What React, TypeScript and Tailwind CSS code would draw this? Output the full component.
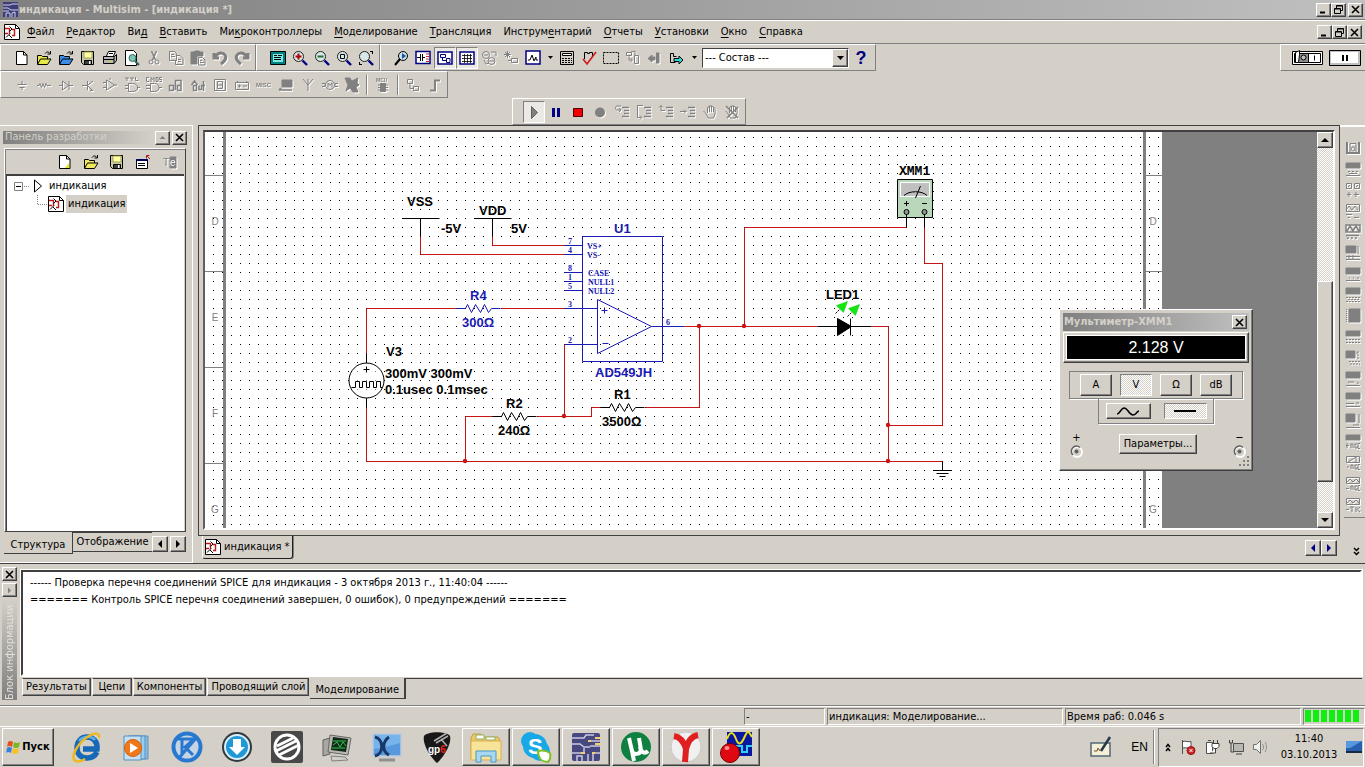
import { useState, type ReactNode } from 'react'

const RAISED =
  'border border-t-white border-l-white border-r-[#404040] border-b-[#404040] bg-[#d4d0c8] shadow-[inset_-1px_-1px_0_#808080]'
const PRESSED =
  'border border-t-[#808080] border-l-[#808080] border-r-white border-b-white bg-[#ebe9e4]'
const BAND =
  'flex items-center border border-t-white border-l-white border-r-[#808080] border-b-[#808080]'
const DISABLED = 'text-[#808080] drop-shadow-[1px_1px_0_#ffffff]'
const CHECKER =
  'bg-[repeating-conic-gradient(#ffffff_0_25%,#d4d0c8_0_50%)] bg-[length:2px_2px]'

function Icon({ children, size = 16 }: { children: ReactNode; size?: number }) {
  return (
    <svg
      width={size}
      height={size}
      viewBox="0 0 16 16"
      fill="none"
      stroke="currentColor"
      aria-hidden="true"
      className="shrink-0"
    >
      {children}
    </svg>
  )
}

function Lens({ children }: { children?: ReactNode }) {
  return (
    <>
      <circle cx="6.5" cy="6.5" r="5" fill="#d8e8e8" stroke="#202020" />
      <path d="M10.5 10.5l4.5 4.5" stroke="#000080" strokeWidth="2.4" />
      {children}
    </>
  )
}

const folder = (fill: string) => (
  <>
    <path d="M1.5 14V5.5h4l1 1h5v2.5" fill={fill} />
    <path d="M1.5 14.5l3-5.5h10.5l-3.5 5.5z" fill={fill} />
    <path d="M9 3.5c1.5-2 3.5-2 5 0M14.5 1v3h-3" />
  </>
)

const listLines = <path d="M8 3.5h7M10 6.5h5M10 9.5h5M8 12.5h7" strokeWidth="1.3" />

const hand = (
  <path d="M3.5 9l3 5h5l1.500-4V4.5M3.5 9l-2-2M5.5 9V3.5M7.5 8V2M9.5 8V2M11.5 8V3M5.5 3.5l2-1.5h2l2 1 1.500 1.5" />
)

const floppy = (
  <>
    <path d="M1.5 1.5h12v13h-10l-2-2z" fill="#c8c8a8" />
    <path d="M4 2h8v6h-8z" fill="#ffffa8" stroke="#a0a050" />
    <path d="M4.5 10.5h7v4h-7z" fill="#404040" />
    <path d="M9 11h1.5v3H9z" fill="#fff" stroke="none" />
  </>
)

const doc = (
  <>
    <path d="M2.5 1.5h7l3.5 3.500v9.500H2.5z" fill="#fff" />
    <path d="M9.5 1.5V5H13" />
  </>
)

const schematicDoc = (
  <>
    <path d="M.5.5h11l4 4v11H.5z" fill="#fff" />
    <path d="M11.5.5v4h4" />
    <path d="M1 4.5h4M1 9.5h3M8 5.5h2.5v6H8M5.5 4v6" stroke="#c01818" strokeWidth="1.4" />
    <path d="M5.5 2.5L8 5 5.5 7.500M6 9.500l-4 4M5 11l3 3" />
  </>
)

const stdIcons: { name: string; off?: boolean; art: ReactNode }[] = [
  { name: 'Создать', art: doc },
  { name: 'Открыть', art: folder('#e8e84a') },
  { name: 'Открыть пример', art: folder('#3b8de8') },
  { name: 'Сохранить', art: floppy },
  {
    name: 'Печать',
    art: (
      <>
        <path d="M4.5 6l2-4.5h7l-2 4.5" fill="#fff" />
        <path d="M1.5 6.5h11l2-2v6l-2.5 3H1.5z" fill="#b8b8b0" />
        <path d="M1 9.5h11M7 3.5h4M12 13.5v-7" />
        <path d="M8 11.5h2" stroke="#d8d820" />
      </>
    ),
  },
  {
    name: 'Просмотр',
    art: (
      <>
        <path d="M1.5.5h8l3 3v12h-11z" fill="#fff" />
        <circle cx="8.5" cy="8" r="3.5" fill="#7ac6b4" stroke="#406860" />
        <path d="M11 11l4 4" stroke="#306058" strokeWidth="2.2" />
      </>
    ),
  },
  {
    name: 'Вырезать',
    off: true,
    art: (
      <>
        <path d="M5.5 1l4 9M10.5 1l-4 9" strokeWidth="1.5" />
        <circle cx="5" cy="12" r="2" />
        <circle cx="11" cy="12" r="2" />
      </>
    ),
  },
  {
    name: 'Копировать',
    off: true,
    art: <path d="M1.5 1.5h5l2 2v7h-7zM3 4.5h3M3 6.5h4M8 5.5h4l3 3v6H7.5v-4M10 9.5h3M10 11.5h3" />,
  },
  {
    name: 'Вставить',
    off: true,
    art: (
      <>
        <path d="M1 2h3l1-1h4l1 1h3v4H7v8H1z" fill="currentColor" />
        <path d="M8.5 7.5h4L15 10v5H8.500zM10 10.5h2M10 12.5h4" />
      </>
    ),
  },
  { name: 'Отменить', off: true, art: <path d="M2 3v5h5M3 7c3-5 8-5 10-2s0 6-4 9" strokeWidth="3" /> },
  { name: 'Вернуть', off: true, art: <path d="M14 3v5H9M13 7C10 2 5 2 3 5s0 6 4 9" strokeWidth="3" /> },
]

const viewIcons: { name: string; art: ReactNode }[] = [
  {
    name: 'Полный экран',
    art: (
      <>
        <path d="M.5 1.5h15v13H.5z" fill="#008080" />
        <path d="M3 4h10v8H3z" fill="#80e8e0" stroke="none" />
        <path d="M4 5.5h3M8 5.5h4M4 7.5h7M4 9.5h7" />
      </>
    ),
  },
  { name: 'Увеличить', art: <Lens><path d="M3.5 6.5h6M6.5 3.5v6" stroke="#b00000" strokeWidth="2" /></Lens> },
  { name: 'Уменьшить', art: <Lens><path d="M3.5 6.5h6" stroke="#207030" strokeWidth="2" /></Lens> },
  { name: 'Масштаб области', art: <Lens><path d="M4.5 4.5h4v4h-4z" /></Lens> },
  { name: 'Масштаб листа', art: <Lens><path d="M12 1.5h3M14.5 1v3M1.5 12v3M1 14.5h3" /></Lens> },
]

const toolIcons: { name: string; off?: boolean; on?: boolean; art: ReactNode }[] = [
  {
    name: 'Поиск',
    art: (
      <>
        <circle cx="10" cy="6" r="4.5" fill="#c8e0e8" />
        <path d="M9 3l4 3-4 3z" fill="#2050a0" stroke="none" />
        <path d="M7 9l-5 6" strokeWidth="2" />
      </>
    ),
  },
  {
    name: 'Соединитель',
    art: (
      <>
        <path d="M1 1.5h14v12H1z" fill="#fff" stroke="#000080" strokeWidth="1.5" />
        <path d="M2 7.5h3M5.5 4v7M7.5 4v7M8 7.5h2" />
        <path d="M11 4h3M11 6.5h3M11 9h3M11 11.5h3" stroke="#d02020" />
      </>
    ),
  },
  {
    name: 'Панель разработки',
    on: true,
    art: (
      <>
        <path d="M1 2h14v12H1z" fill="#fff" stroke="#000080" strokeWidth="1.5" />
        <path d="M3.5 4.5h5v3h-5zM5.5 8v2.500h4M9.5 8.500h3.500v4H9.500z" stroke="#000080" />
      </>
    ),
  },
  {
    name: 'Таблица',
    on: true,
    art: (
      <>
        <path d="M1 2h14v12H1z" fill="#fff" stroke="#000080" strokeWidth="1.5" />
        <path d="M3 5.5h10M3 8.5h10M3 11.500h10M5.5 4v9M8.5 4v9M11.500 4v9" strokeWidth=".8" />
      </>
    ),
  },
  {
    name: 'База данных',
    off: true,
    art: (
      <>
        <circle cx="5" cy="5" r="3.500" />
        <circle cx="10.500" cy="11" r="3.500" />
        <path d="M3 5h4M8 11h5M10 2h5v4M3 10l2 4 3-1" />
      </>
    ),
  },
  { name: 'Создать компонент', off: true, art: <path d="M4.5 1v7M1 4.5h7M2 2l5 5M7 2L2 7M5 10.5h3M8.5 8.5h6v4h-6z" /> },
  {
    name: 'Плоттер',
    art: (
      <>
        <path d="M1 1h14v13H1z" fill="#fff" stroke="#000080" strokeWidth="1.5" />
        <path d="M3 10h2l2-5 2 6 2-4v3h2" />
      </>
    ),
  },
]

const moreIcons: { name: string; off?: boolean; art: ReactNode }[] = [
  {
    name: 'Постпроцессор',
    art: (
      <>
        <path d="M1.5 1.5h13v13h-13z" />
        <path d="M3.5 3.5h9v2h-9z" fill="#fff" />
        <path d="M3 8.5h10M3 10.5h10M3 12.5h10" strokeDasharray="2 1" />
      </>
    ),
  },
  {
    name: 'Проверка цепи',
    art: (
      <>
        <path d="M3.5 9V2.500h3v1h2v-1h3v4" />
        <path d="M2 9l4 5 9-12" stroke="#d01818" strokeWidth="1.6" />
      </>
    ),
  },
  { name: 'Область', art: <path d="M.5 2.5h15v11H.5z" strokeDasharray="2 1" /> },
  { name: 'Иерархия', off: true, art: <path d="M1.5 2.5h5v3h-5zM9.5 5.5h4v8h-4zM4 6v4h3M5.5 8l2 2-2 2M6 2l4-1v4" /> },
  { name: 'Обратная аннотация', off: true, art: <path d="M1 8.5L5 5v2h3v3H5v2zM9 3h3v10H9" fill="currentColor" /> },
  {
    name: 'Прямая аннотация',
    art: (
      <>
        <path d="M1.5 12.5v-9h3v3h3M1.500 12.500h5" />
        <path d="M5 8.500h5V6l4 4-4 4v-2.500H5z" fill="#30d8d0" />
      </>
    ),
  },
]

const partIcons: { name: string; art: ReactNode }[] = [
  { name: 'Источники', art: <path d="M8 4v3M3.5 7.500h9M5.500 10.500h5M8 11v2" /> },
  { name: 'Пассивные', art: <path d="M1 8.5h2l1-2 1.500 4 1.500-4 1.500 4 1.500-4 1 2h4" /> },
  { name: 'Диоды', art: <path d="M1 8.5h3M4.5 4v9l6-4.500zM11 4v9M11 8.5h4" /> },
  { name: 'Транзисторы', art: <path d="M2 8.5h5M7.5 4v9M8 8l5-4M8 9l5 5M13 13.5h-3" /> },
  { name: 'Аналоговые', art: <path d="M4.5 3v10l8-5zM1 5.5h3M1 10.5h3M12 8h3M8 3V1" /> },
  { name: 'ТТЛ', art: <path d="M4.5 6.5h4c7 0 7 8 0 8h-4zM1 8.5h3M1 11.5h3M13 10.5h3M1 1h4M3 1v3M6 1h4M8 1v3M11.5 0v3.500h3" /> },
  { name: 'КМОП', art: <path d="M4.5 6.5h4c6 0 6 8 0 8h-4zM0 8.5h4M0 11.5h4M13 10.5h3M3 .5H.5v4H3M5 5V.5L6.5 2.5 8 .5V5M10 4.5v-4h2v4zM16 .5h-2.500v2H16v2h-2.500" /> },
  { name: 'Цифровые', art: <path d="M1.5 8.5h4v5h-4zM7.5 3v10M7 3.5h6v9M9.5 8.5H13v5H9.500z" strokeWidth="1.5" /> },
  { name: 'Смешанные', art: <path d="M1.5 8l3-4 3 4M3.500 8.500h3v5h-3zM9 8.5v4h2.500v-4M13.500 4v10M11 8.5h4" strokeWidth="1.5" /> },
  { name: 'Индикаторы', art: <path d="M2.5 2.5h11v11h-11zM5.5 4.5h5v7h-5zM5.5 8h5" /> },
  { name: 'Силовые', art: <path d="M1.5 5.5h13v7h-13zM3.5 4v1M12.5 4v1M4 9h3M9 9h4M5.5 7.5v3" /> },
  {
    name: 'Прочие',
    art: (
      <text x="0" y="10" fontSize="6" fill="currentColor" stroke="none" fontWeight="bold" fontFamily="Liberation Sans, sans-serif">
        MISC
      </text>
    ),
  },
  {
    name: 'Периферия',
    art: (
      <>
        <path d="M4 3h10v7H4z" fill="currentColor" />
        <path d="M1 13h13M1 13l2-2" strokeWidth="1.5" />
      </>
    ),
  },
  { name: 'ВЧ', art: <path d="M3 2l5 6 5-6M8 2v12" /> },
  {
    name: 'Электромеханика',
    art: (
      <>
        <circle cx="8" cy="8" r="4.5" />
        <path d="M0 6.500h3v3H0M16 6.500h-3v3h3M6 10.5V6l2 2.500L10 6v4.5" />
      </>
    ),
  },
  { name: 'NI', art: <path d="M1 1h5l2 3 6-3-1 5 2 2-3 2 2 5H9l-3-4-4 3 2-6z" fill="currentColor" /> },
]

const simIcons: { name: string; off?: boolean; on?: boolean; art: ReactNode }[] = [
  { name: 'Пуск', on: true, art: <path d="M5.5 2.5l6 6-6 6z" fill="#808080" stroke="#606060" /> },
  { name: 'Пауза', art: <path d="M4 4h3v9H4zM9 4h3v9H9z" fill="#000080" stroke="none" /> },
  { name: 'Стоп', art: <path d="M3.5 4.5h9v8h-9z" fill="#f00000" stroke="#500000" /> },
  { name: 'Запись', off: true, art: <circle cx="8" cy="8.5" r="5" fill="currentColor" stroke="none" /> },
  { name: 'Шаг с заходом', off: true, art: <>{listLines}<path d="M7 2H3C1 2 1 6 3 6h3M5 4l2 2-2 2" /></> },
  { name: 'Шаг с обходом', off: true, art: <>{listLines}<path d="M7 1.5H1.5v12H5M4 11.5l2 2-2 2" /></> },
  { name: 'Шаг с выходом', off: true, art: <>{listLines}<path d="M3 1.5v5h4M1 3.5l2-2 2 2" /></> },
  { name: 'До курсора', off: true, art: <>{listLines}<path d="M0 7.5h6M4 5.5l2 2-2 2" /></> },
  { name: 'Точка останова', off: true, art: hand },
  { name: 'Удалить точки', off: true, art: <>{hand}<path d="M2 2l12 12M3 14L14 3" strokeWidth="1.5" /></> },
]

const menu = [
  ['', 'Ф', 'айл'],
  ['', 'Р', 'едактор'],
  ['Ви', 'д', ''],
  ['', 'В', 'ставить'],
  ['Ми', 'к', 'роконтроллеры'],
  ['', 'М', 'оделирование'],
  ['', 'Т', 'рансляция'],
  ['Инструм', 'е', 'нтарий'],
  ['', 'О', 'тчеты'],
  ['', 'У', 'становки'],
  ['', 'О', 'кно'],
  ['', 'С', 'правка'],
]

function ToolButton({ name, off, on, children }: { name: string; off?: boolean; on?: boolean; children: ReactNode }) {
  return (
    <button
      type="button"
      aria-label={name}
      className={`flex h-[22px] w-[22px] shrink-0 items-center justify-center ${on ? PRESSED : ''}`}
    >
      <span className={off ? DISABLED : 'text-black'}>
        <Icon>{children}</Icon>
      </span>
    </button>
  )
}

function DropArrow() {
  return (
    <button type="button" aria-label="Список" className="flex w-3 shrink-0 justify-center">
      <svg width="5" height="3" aria-hidden="true"><path d="M0 0h5L2.5 3z" /></svg>
    </button>
  )
}

function CaptionButton({ name, art }: { name: string; art: 'min' | 'restore' | 'close' | 'up' | 'right' }) {
  return (
    <button
      type="button"
      aria-label={name}
      className={`flex h-[14px] w-[15px] shrink-0 items-center justify-center ${RAISED}`}
    >
      <svg width="9" height="9" viewBox="0 0 9 9" fill="none" stroke="#000" aria-hidden="true">
        {art === 'min' && <path d="M1 7.500h5" strokeWidth="2" />}
        {art === 'restore' && <path d="M2.5 3V.5h6v5h-2M2.5 1h6M.5 3.5h6v5h-6zM.5 4h6" />}
        {art === 'close' && <path d="M1 1l7 7M8 1L1 8" strokeWidth="1.6" />}
        {art === 'up' && <path d="M1.5 6h6l-3-3z" fill="#808080" stroke="none" />}
        {art === 'right' && <path d="M3 1.5v6l3-3z" fill="#808080" stroke="none" />}
      </svg>
    </button>
  )
}

function ArrowButton({ dir, color = '#000' }: { dir: 'left' | 'right' | 'up' | 'down'; color?: string }) {
  const paths = { left: 'M6 0v8L2 4z', right: 'M2 0v8l4-4z', up: 'M0 6h8L4 2z', down: 'M0 2h8L4 6z' }
  return (
    <button type="button" aria-label={dir} className={`flex h-4 w-4 shrink-0 items-center justify-center ${RAISED}`}>
      <svg width="8" height="8" aria-hidden="true"><path d={paths[dir]} fill={color} /></svg>
    </button>
  )
}

function TitleBar() {
  return (
    <header className="flex h-5 shrink-0 items-center border-b border-[#808080] bg-linear-to-r from-[#808080] to-[#c0c0c0] pr-[2px] pl-[3px]">
      <svg width="15" height="15" viewBox="0 0 15 15" aria-hidden="true">
        <path d="M0 0h15v15H0z" fill="#3c3c78" />
        <path d="M0 3h7l2-1h6M0 6h5l3 2h7M0 9h6M3 15v-4h4v4M9 15v-4l3-1v5" fill="none" stroke="#d0d0e8" />
      </svg>
      <h1 className="ml-[1px] flex-1 font-bold text-[#d4d0c8]">индикация - Multisim - [индикация *]</h1>
      <CaptionButton name="Свернуть" art="min" />
      <CaptionButton name="Восстановить" art="restore" />
      <div className="w-[2px]" />
      <CaptionButton name="Закрыть" art="close" />
    </header>
  )
}

function MenuBar() {
  return (
    <nav className="flex h-6 shrink-0 items-center border-t border-b border-t-white border-b-[#808080] pr-[3px] pl-1">
      <Icon>{schematicDoc}</Icon>
      <div className="flex flex-1 pl-[1px]">
        {menu.map(([before, key, after]) => (
          <button key={before + key + after} type="button" className="px-[6px]">
            {before}
            <u className="underline-offset-2">{key}</u>
            {after}
          </button>
        ))}
      </div>
      <CaptionButton name="Свернуть документ" art="min" />
      <CaptionButton name="Восстановить документ" art="restore" />
      <CaptionButton name="Закрыть документ" art="close" />
    </nav>
  )
}

function Toolbars() {
  return (
    <div className="shrink-0">
      <div className="flex h-[27px]">
        <div className={`${BAND} w-64 pl-[10px]`}>
          {stdIcons.map((i) => <ToolButton key={i.name} name={i.name} off={i.off}>{i.art}</ToolButton>)}
        </div>
        <div className={`${BAND} w-[124px] pl-[10px]`}>
          {viewIcons.map((i) => <ToolButton key={i.name} name={i.name}>{i.art}</ToolButton>)}
        </div>
        <div className={`${BAND} w-[496px] pl-[9px]`}>
          {toolIcons.map((i) => <ToolButton key={i.name} name={i.name} off={i.off} on={i.on}>{i.art}</ToolButton>)}
          <DropArrow />
          {moreIcons.map((i) => <ToolButton key={i.name} name={i.name} off={i.off}>{i.art}</ToolButton>)}
          <DropArrow />
          <div className="relative ml-[2px] flex h-5 w-[147px] border border-t-[#404040] border-r-white border-b-white border-l-[#404040] bg-white">
            <select aria-label="Состав" className="w-full appearance-none pl-[2px] outline-none">
              <option>--- Состав ---</option>
            </select>
            <span className={`pointer-events-none absolute inset-y-0 right-0 flex w-4 items-center justify-center ${RAISED}`}>
              <svg width="7" height="4" aria-hidden="true"><path d="M0 0h7L3.5 4z" /></svg>
            </span>
          </div>
          <button type="button" aria-label="Справка по программе" className="w-6 font-['Liberation_Sans',sans-serif] text-[18px] leading-5 font-bold text-[#000080]">
            ?
          </button>
        </div>
        <div className="flex-1" />
        <div className={`${BAND} w-[85px] justify-end gap-[6px] border-r-0 pr-[4px]`}>
          <button type="button" aria-label="Выключатель" className="h-4 w-[31px]">
            <svg width="31" height="16" viewBox="0 0 31 16" fill="none" stroke="#000" aria-hidden="true">
              <path d="M.5 1.5h30v13H.5z" fill="#fff" />
              <path d="M2.5 3.5h26v9h-26z" fill="#fff" />
              <path d="M3 4h13v8H3z" fill="#909090" stroke="none" />
              <path d="M16.5 3.500v9" />
              <path d="M3.5 12.500V2.500l4-2v4l-1 8z" fill="#fff" />
              <circle cx="11.5" cy="7.5" r="2.5" fill="#c0c0c0" />
              <path d="M22.5 5.5v5" />
            </svg>
          </button>
          <button type="button" aria-label="Пауза моделирования" className="h-4 w-[32px]">
            <svg width="32" height="16" viewBox="0 0 32 16" aria-hidden="true">
              <path d="M.5.5h31v15H.5z" fill="#c0c0c0" stroke="#000" />
              <path d="M2 2h27v11H2z" fill="#fff" />
              <path d="M13 5h2v6h-2zM17 5h2v6h-2z" />
            </svg>
          </button>
        </div>
      </div>
      <div className="flex h-[27px]">
        <div className={`${BAND} w-[448px] pl-[10px]`}>
          {partIcons.map((i) => <ToolButton key={i.name} name={i.name} off>{i.art}</ToolButton>)}
          <span className="ml-[3px] h-5 w-[2px] border-r border-l border-r-white border-l-[#808080]" />
          <span className="w-[4px]" />
          <ToolButton name="Микроконтроллер" off>
            <text x="1" y="5" fontSize="5" fill="currentColor" stroke="none" fontWeight="bold" fontFamily="Liberation Sans, sans-serif">MCU</text>
            <path d="M5.5 6.5h5v8h-5zM3 8h10M3 10.5h10M3 13h10" fill="currentColor" />
          </ToolButton>
          <span className="ml-[3px] h-5 w-[2px] border-r border-l border-r-white border-l-[#808080]" />
          <span className="w-[3px]" />
          <ToolButton name="Иерархический блок" off>
            <path d="M2.5 2.5h5v4h-5zM5 7v4.5h3M8.5 9.5h5v4h-5z" />
          </ToolButton>
          <ToolButton name="Шина" off>
            <path d="M3 13.5h5v-10h5" strokeWidth="2" />
          </ToolButton>
        </div>
      </div>
      <div className="flex h-[27px] pl-[512px]">
        <div className={`${BAND} w-[234px] pl-[10px]`}>
          {simIcons.map((i) => <ToolButton key={i.name} name={i.name} off={i.off} on={i.on}>{i.art}</ToolButton>)}
        </div>
      </div>
    </div>
  )
}

function DesignPanel() {
  return (
    <aside className="flex w-[193px] shrink-0 flex-col border-t border-r border-b border-white pt-1 pb-[3px]">
      <div className="ml-[3px] flex h-[15px] items-center gap-[2px] pr-[5px]">
        <h2 className="h-[13px] flex-1 bg-linear-to-r from-[#808080] to-[#d4d0c8] pl-[2px] leading-[12px] text-[#d4d0c8]">
          Панель разработки
        </h2>
        <CaptionButton name="Свернуть панель" art="up" />
        <CaptionButton name="Закрыть панель" art="close" />
      </div>
      <div className="mt-[3px] mr-[6px] ml-1 flex min-h-0 flex-1 flex-col border border-t-white border-l-white border-r-[#404040] border-b-[#404040] shadow-[inset_1px_1px_0_#808080]">
        <div className="flex h-[25px] shrink-0 items-center justify-end gap-1 pr-[5px]">
          <ToolButton name="Новый проект">
            {doc}
            <path d="M12 9v5H8z" fill="#e8e820" stroke="none" />
          </ToolButton>
          <ToolButton name="Открыть проект">{folder('#f0e860')}</ToolButton>
          <ToolButton name="Сохранить проект">{floppy}</ToolButton>
          <ToolButton name="Закрыть проект">
            <path d="M1.5 5.5h11v9h-11z" fill="#fff" />
            <path d="M1.5 6h11" stroke="#000060" strokeWidth="2" />
            <path d="M3 9.5h7M3 11.5h7" />
            <path d="M15 5l-3-3M11.5 4.5v-3h3" stroke="#a02020" />
          </ToolButton>
          <ToolButton name="Переименовать" off>
            <path d="M9 3h6v11H9z" fill="currentColor" />
            <text x="2" y="12" fontSize="10" fill="currentColor" stroke="none" fontFamily="Liberation Sans, sans-serif">T</text>
            <text x="9" y="12" fontSize="10" fill="#fff" stroke="none" fontFamily="Liberation Sans, sans-serif">e</text>
          </ToolButton>
        </div>
        <ul className="mx-[1px] min-h-0 flex-1 border-t-2 border-l border-[#404040] bg-white pt-[1px] pl-[7px]">
          <li className="flex h-[18px] items-center">
            <svg width="16" height="18" aria-hidden="true" fill="none" stroke="#808080">
              <path d="M.5 5.5h8v8h-8z" />
              <path d="M2 9.5h5" stroke="#000" />
              <path d="M10 9.5h6" strokeDasharray="1 1" />
            </svg>
            <svg width="10" height="14" className="ml-1" aria-hidden="true">
              <path d="M.5 1v12l7-6z" fill="#fff" stroke="#000" />
            </svg>
            <span className="ml-[5px]">индикация</span>
          </li>
          <li className="flex h-[18px] items-center">
            <svg width="11" height="18" className="ml-[23px]" aria-hidden="true">
              <path d="M.5 0v9.5H11" fill="none" stroke="#808080" strokeDasharray="1 1" />
            </svg>
            <Icon>{schematicDoc}</Icon>
            <span className="ml-[2px] bg-[#d4d0c8] px-[2px] leading-[18px]">индикация</span>
          </li>
        </ul>
      </div>
      <div role="tablist" className="mr-[6px] ml-1 flex h-[27px] items-start">
        <button type="button" role="tab" aria-selected="true" className="h-[22px] w-[69px] border-r border-b border-[#404040] pt-[4px]">
          Структура
        </button>
        <button type="button" role="tab" aria-selected="false" className="h-[20px] flex-1 border border-t-[#404040] border-r-0 border-b-[#404040] border-l-0">
          Отображение
        </button>
        <div className="flex gap-[2px] pt-1">
          <ArrowButton dir="left" />
          <ArrowButton dir="right" />
        </div>
      </div>
    </aside>
  )
}

const zigzag = 'h9l2-4 4 8 4-8 5 8 4-8 4 8 3-4h9'
const BLUE = '#1a1ab4'
const RED = '#c81414'

const labels: { x: number; y: number; text: string; blue?: boolean }[] = [
  { x: 407, y: 206, text: 'VSS' },
  { x: 479, y: 215, text: 'VDD' },
  { x: 441, y: 233, text: '-5V' },
  { x: 511, y: 233, text: '5V' },
  { x: 614, y: 233, text: 'U1', blue: true },
  { x: 470, y: 300, text: 'R4', blue: true },
  { x: 462, y: 327, text: '300Ω', blue: true },
  { x: 595, y: 377, text: 'AD549JH', blue: true },
  { x: 386, y: 356, text: 'V3' },
  { x: 385, y: 378, text: '300mV 300mV' },
  { x: 385, y: 394, text: '0.1usec 0.1msec' },
  { x: 506, y: 408, text: 'R2' },
  { x: 498, y: 435, text: '240Ω' },
  { x: 614, y: 399, text: 'R1' },
  { x: 602, y: 426, text: '3500Ω' },
  { x: 826, y: 299, text: 'LED1' },
]

const pins = [
  { x: 587, y: 249, text: 'VS+' },
  { x: 587, y: 258, text: 'VS-' },
  { x: 588, y: 276, text: 'CASE' },
  { x: 588, y: 285, text: 'NULL1' },
  { x: 588, y: 294, text: 'NULL2' },
  { x: 568, y: 244, text: '7' },
  { x: 568, y: 253, text: '4' },
  { x: 568, y: 271, text: '8' },
  { x: 568, y: 280, text: '1' },
  { x: 568, y: 289, text: '5' },
  { x: 568, y: 307, text: '3' },
  { x: 568, y: 343, text: '2' },
  { x: 666, y: 325, text: '6' },
]

const zones = [
  { x: 215, y: 225, text: 'D' },
  { x: 215, y: 321, text: 'E' },
  { x: 215, y: 417, text: 'F' },
  { x: 215, y: 513, text: 'G' },
  { x: 1153, y: 225, text: 'D' },
  { x: 1153, y: 513, text: 'G' },
]

const ticks = [175, 271, 367, 463]
const nodes = [[699, 326], [744, 326], [564, 416], [465, 461], [888, 425], [888, 461]]

function Schematic() {
  return (
    <svg width="957" height="600" viewBox="205 132 957 600" className="shrink-0" role="img" aria-label="Схема">
      <defs>
        <pattern id="grid" x="213" y="137" width="9" height="9" patternUnits="userSpaceOnUse">
          <rect width="1" height="1" fill="#000" />
        </pattern>
      </defs>
      <rect x="205" y="132" width="957" height="600" fill="#fff" />
      <rect x="205" y="132" width="957" height="600" fill="url(#grid)" />
      <path d="M223 132h3v600h-3zM1143 132h3v600h-3z" fill="#808080" />
      <g fill="#808080" fontSize="10" fontFamily="Liberation Sans, sans-serif" textAnchor="middle">
        {ticks.map((y) => <path key={y} d={`M205 ${y}h18v1h-18zM1146 ${y}h16v1h-16z`} />)}
        {zones.map((z) => <text key={z.text + z.x} x={z.x} y={z.y}>{z.text}</text>)}
      </g>
      <g transform="translate(.5 .5)" fill="none" stroke={RED}>
        <path d="M420 236v18h144M492 236v9h72M366 353v-45h90M501 308h63M564 344v72M537 416h54v-9h9M645 407h54v-81M684 326h133M871 326h17v135M744 326v-99h162M924 227v36h18v162h-54M366 407v54h576M465 461v-45h27" />
      </g>
      <g transform="translate(.5 .5)" fill="none" stroke="#000">
        <path d="M402 218h37M420 218v18M474 218h37M492 218v18M366 353v10M366 398v9" />
        <circle cx="366" cy="380" r="17.5" fill="#fff" fillOpacity=".5" />
        <path d="M363 369h6M366 366v6M351 387h4v-6h4v6h3v-6h4v6h3v-6h4v6h3v-6h4v6h2" />
        <path d={`M492 416${zigzag}`} />
        <path d={`M600 407${zigzag}`} />
        <path d="M817 326h54M850 318v17M942 461v9M933 470h18M936 473h12M939 476h6" />
        <path d="M837 318v17l14-9z" fill="#000" />
        <path d="M835 313l5-5M847 316l5-5" strokeDasharray="2 1" />
        <path d="M836 305l11-4-4 11zM848 308l11-4-4 11z" fill="#10e810" stroke="#10c810" strokeWidth=".5" />
      </g>
      <g transform="translate(.5 .5)" fill="none" stroke={BLUE}>
        <path d="M582 236h80v125h-80z" />
        <path d="M564 245h18M564 254h18M564 272h18M564 281h18M564 290h18M564 308h33M564 344h33M651 326h33M597 299v54l54-27zM601 310h6M604 307v6M602 343h6" />
        <path d={`M456 308${zigzag}`} />
      </g>
      <g fill={RED}>
        {nodes.map(([x, y]) => <circle key={`${x}-${y}`} cx={x} cy={y} r="2.2" />)}
      </g>
      <g stroke="#000">
        <path d="M897.5 179.5h35v38h-35z" fill="#b9d8bb" />
        <path d="M900.5 182.500h29v14h-29z" fill="#c0c0c0" stroke="#fff" />
        <path d="M904 195.5c5-5 18-5 23 0M915.500 198l5-12M904 203.5h5M906.5 201v5M922 203.5h5M906.5 213v14M924.5 213v14" fill="none" />
        <circle cx="906.5" cy="212" r="2.5" fill="#909890" />
        <circle cx="924.5" cy="212" r="2.5" fill="#909890" />
      </g>
      <g fontFamily="Liberation Sans, sans-serif" fontWeight="bold" fontSize="13">
        {labels.map((l) => (
          <text key={l.text + l.x} x={l.x} y={l.y} fill={l.blue ? BLUE : '#000'}>{l.text}</text>
        ))}
      </g>
      <g fontFamily="Liberation Serif, serif" fontWeight="bold" fontSize="8" fill={BLUE}>
        {pins.map((p) => <text key={p.text} x={p.x} y={p.y}>{p.text}</text>)}
      </g>
      <text x="899" y="175" fontFamily="Liberation Mono, monospace" fontWeight="bold" fontSize="13">XMM1</text>
    </svg>
  )
}

function Terminal() {
  return (
    <svg width="13" height="13" viewBox="0 0 13 13" fill="none" aria-hidden="true">
      <circle cx="7" cy="7" r="5" stroke="#fff" strokeWidth="2" />
      <path d="M3 10A5 5 0 0 1 10 2.5" stroke="#606060" strokeWidth="1.5" />
      <circle cx="6.5" cy="6.5" r="2" fill="#606060" />
    </svg>
  )
}

function Multimeter() {
  const [mode, setMode] = useState('V')
  return (
    <section className={`absolute top-[183px] right-[86px] h-[162px] w-[194px] p-[3px] ${RAISED}`}>
      <div className="flex h-[18px] items-center justify-between bg-linear-to-r from-[#808080] to-[#c0c0c0] pr-[2px] pl-[1px]">
        <h2 className="font-bold text-[#d4d0c8]">Мультиметр-XMM1</h2>
        <CaptionButton name="Закрыть мультиметр" art="close" />
      </div>
      <div className={`mt-[1px] h-[31px] p-[2px] ${RAISED}`}>
        <output className="block h-[25px] border border-white bg-black text-center font-['Liberation_Sans',sans-serif] text-[16px] leading-[23px] text-white">
          2.128 V
        </output>
      </div>
      <div className="mx-[6px] mt-[8px] flex h-7 items-center justify-center gap-2 border border-[#808080] shadow-[1px_1px_0_#fff]">
        {['A', 'V', 'Ω', 'dB'].map((m) => (
          <button
            key={m}
            type="button"
            onClick={() => setMode(m)}
            className={`h-[22px] w-8 ${mode === m ? `${PRESSED} ${CHECKER}` : RAISED}`}
          >
            {m}
          </button>
        ))}
      </div>
      <div className="mx-auto flex h-[25px] w-[116px] items-center justify-around border border-t-0 border-[#808080] shadow-[1px_1px_0_#fff]">
        <button type="button" aria-label="Переменный ток" className={`flex h-4 w-[45px] items-center justify-center ${RAISED}`}>
          <svg width="22" height="9" fill="none" stroke="#000" strokeWidth="1.5" aria-hidden="true">
            <path d="M0 7c3 0 4-6 7-6 4 0 5 7 9 7 3 0 3-3 6-4" />
          </svg>
        </button>
        <button type="button" aria-label="Постоянный ток" className={`flex h-4 w-[43px] items-center justify-center ${PRESSED} ${CHECKER}`}>
          <span className="h-[2px] w-[22px] bg-black" />
        </button>
      </div>
      <div className="flex items-start justify-between pt-[10px] pr-[3px] pl-[7px]">
        <div className="flex flex-col items-center gap-[3px] leading-[8px]">
          <span>+</span>
          <Terminal />
        </div>
        <button type="button" className={`h-5 w-[78px] ${RAISED}`}>Параметры...</button>
        <div className="flex flex-col items-center gap-[3px] leading-[8px]">
          <span>−</span>
          <Terminal />
        </div>
      </div>
      <svg width="12" height="12" className="absolute right-[2px] bottom-[2px]" aria-hidden="true">
        <path d="M9 0h2v2H9zM5 4h2v2H5zM9 4h2v2H9zM1 8h2v2H1zM5 8h2v2H5zM9 8h2v2H9z" fill="#808080" />
      </svg>
    </section>
  )
}

function Workspace() {
  return (
    <main className="ml-[5px] flex min-w-0 flex-1 flex-col">
      <div className="relative flex min-h-0 flex-1 border border-[#404040] p-1 pb-[5px]">
        <div className="flex min-w-0 flex-1 border-2 border-t-[#404040] border-r-white border-b-white border-l-[#606060]">
          <div className="flex min-w-0 flex-1 overflow-hidden bg-[#808080]">
            <Schematic />
          </div>
          <div className={`flex w-4 shrink-0 flex-col ${CHECKER}`}>
            <ArrowButton dir="up" />
            <div className="min-h-0 flex-[134]" />
            <div className={`min-h-0 flex-[201] ${RAISED}`} />
            <div className="min-h-0 flex-[30]" />
            <ArrowButton dir="down" />
          </div>
        </div>
        <Multimeter />
      </div>
      <div className="flex h-[27px] shrink-0 items-start justify-between pr-[3px] pl-1">
        <button type="button" className="flex h-[23px] items-center gap-[2px] rounded-b-[3px] border border-t-0 border-l-white border-r-[#202020] border-b-[#202020] px-[2px] shadow-[1px_0_0_#808080]">
          <Icon>{schematicDoc}</Icon>
          <span className="px-px">индикация *</span>
        </button>
        <div className="flex pt-1">
          <ArrowButton dir="left" color="#000080" />
          <ArrowButton dir="right" color="#000080" />
        </div>
      </div>
    </main>
  )
}

const instruments: { name: string; art: ReactNode }[] = [
  { name: 'Мультиметр', art: <><path d="M2 2v11M14 2v11M1 13h14" strokeWidth="2" /><path d="M5 3.500h6v9H5z" /><circle cx="8" cy="9" r="2" /></> },
  { name: 'Генератор', art: <><path d="M1 2h14v5H1z" fill="currentColor" /><path d="M1 14.5h14M3 10.5h2M7 10.5h2M11 10.5h2M4 12.5h8" /></> },
  { name: 'Ваттметр', art: <path d="M1.5 1.5h5v5h-5zM9.5 1.5h5v5h-5zM3 5l2-2M11 5l2-2M2 12.5h4M4 10v5M9 12.5h5M11 10v5" /> },
  { name: 'Осциллограф', art: <path d="M1.5 1.5h13v7h-13zM1 7l3-4 3 4 3-4 3 4M1 11.5h6M3 14.5h2M9 14.5h5" /> },
  { name: 'Осциллограф 4', art: <path d="M1 1h14v7H1zM2 7l3-5 3 5 3-5 3 5M1 11.5h13M2 14h2M6 14h2M10 14h2" strokeWidth="1.5" /> },
  { name: 'Плоттер Боде', art: <><path d="M1 1h10v7H1z" fill="currentColor" /><path d="M13 1v8M1 11.5h14M1 14.5h14M4 10v4M8 10v4" /></> },
  { name: 'Частотомер', art: <><path d="M1 2h14v6H1z" fill="currentColor" /><path d="M1 14.5h14M4 12h1M8 12h1M12 12h2" /></> },
  { name: 'Генератор слов', art: <><path d="M1 1h14v6H1z" fill="currentColor" /><path d="M1 10.5h14M3 12.5h12M1 14.5h14" strokeDasharray="2 1" /></> },
  { name: 'Логический анализатор', art: <><path d="M4 1h11v13H4z" fill="currentColor" /><path d="M1.5 1v13" strokeDasharray="1 1" /></> },
  { name: 'Логический преобразователь', art: <><path d="M1 2h14v5H1z" fill="currentColor" /><path d="M1 10.5h14M1 13.5h14" strokeDasharray="2 1" /></> },
  { name: 'Характериограф', art: <><path d="M1 1h9v7H1z" fill="currentColor" /><path d="M13 1v8M11 3h3M4 11.5h11M5 14h10" strokeDasharray="2 1" /></> },
  { name: 'Искажения', art: <><path d="M1 1h14v6H1z" fill="currentColor" /><path d="M1 14.5h14M3 11h6M12 12h2" /></> },
  { name: 'Спектр', art: <><path d="M1 1h14v6H1z" fill="currentColor" /><path d="M1 11.5h8M1 14.5h14M11 11h3" /></> },
  { name: 'Сеть', art: <><path d="M1 1h9v8H1z" fill="currentColor" /><path d="M14 1v9M1 14.5h14M8 12h6" /></> },
  { name: 'Agilent 1', art: <><path d="M1 1h14v5H1z" fill="currentColor" /><path d="M2 9v5M1 11.5h3M6 14v-4h2v4M12 10h-2v4h2v-2M15 9.5h-2v5h2" /></> },
  { name: 'Agilent 2', art: <path d="M1.5 1.5h13v6h-13zM3 7l8-5M11 2v5M2 12h2M6 14v-4h2v4M12 10h-2v4h2v-2M15 9.5h-2v5h2" /> },
  { name: 'Agilent 3', art: <path d="M1.5 1.5h13v6h-13zM2 6l3-3 3 3 3-3 3 3M1 12.5h3M6 14v-4h2v4M12 10h-2v4h2v-2M15 9.5h-2v5h2" /> },
  { name: 'Tektronix', art: <path d="M1.5 1.5h13v6h-13zM2 6l3-3 3 3 3-3 3 3M1 12.5h3M5 10h4M7 10v5M11 10v5M15 10l-3 2.5 3 2.5" /> },
]

function InstrumentBar() {
  return (
    <aside className="flex w-[25px] shrink-0 flex-col border-t-2 border-white pl-1">
      <div className="flex flex-col items-center gap-[5px] border-b border-[#808080] pt-[13px] pr-1 pb-1">
        {instruments.map((i) => (
          <button key={i.name} type="button" aria-label={i.name} className={`h-4 ${DISABLED}`}>
            <Icon>{i.art}</Icon>
          </button>
        ))}
      </div>
      <div className="flex-1" />
      <svg width="7" height="10" className="mb-[6px] ml-[9px]" fill="none" stroke="#000" strokeWidth="1.5" aria-hidden="true">
        <path d="M1 1l2.500 2.500L6 1M1 5l2.500 2.500L6 5" />
      </svg>
    </aside>
  )
}

const infoTabs = ['Результаты', 'Цепи', 'Компоненты', 'Проводящий слой', 'Моделирование']

function InfoPanel() {
  const [tab, setTab] = useState('Моделирование')
  return (
    <section className="flex h-[142px] shrink-0 border-t border-[#404040] pr-[3px] pl-[2px]">
      <div className="flex w-[15px] flex-col items-center gap-[2px] pt-[3px] pb-[5px]">
        <CaptionButton name="Закрыть блок" art="close" />
        <CaptionButton name="Развернуть блок" art="right" />
        <h2 className="flex min-h-0 w-full flex-1 rotate-180 items-center bg-linear-to-b from-[#808080] to-[#d4d0c8] text-[#e4e1da] [writing-mode:vertical-rl]">
          Блок информации
        </h2>
      </div>
      <div className="ml-1 flex min-w-0 flex-1 flex-col pt-[6px]">
        <div className="h-[106px] border-2 border-t-[#404040] border-r-white border-b-white border-l-[#404040] bg-white pt-[2px] pl-[7px] leading-[17px] outline outline-white">
          <p>------ Проверка перечня соединений SPICE для индикация - 3 октября 2013 г., 11:40:04 ------</p>
          <p>======= Контроль SPICE перечня соединений завершен, 0 ошибок), 0 предупреждений =======</p>
        </div>
        <div role="tablist" className="mt-[2px] flex items-start pl-px">
          {infoTabs.map((t) => (
            <button
              key={t}
              type="button"
              role="tab"
              aria-selected={t === tab}
              onClick={() => setTab(t)}
              className={
                t === tab
                  ? 'h-[21px] border-r-2 border-b border-[#404040] px-[5px] pt-[3px]'
                  : 'mr-[1px] h-[18px] min-w-10 border border-t-[#404040] border-r-[#404040] border-b-[#404040] border-l-white px-[3px] shadow-[inset_-1px_-1px_0_#808080]'
              }
            >
              {t}
            </button>
          ))}
          <span className="h-px flex-1 bg-[#404040]" />
        </div>
      </div>
    </section>
  )
}

function StatusBar() {
  const pane = 'h-[17px] border border-t-[#808080] border-l-[#808080] border-r-white border-b-white pl-[1px] leading-[15px]'
  return (
    <footer className="flex h-[21px] shrink-0 items-center justify-end gap-[2px] border-t border-[#808080] shadow-[inset_0_1px_0_#fff]">
      <span className={`${pane} w-[81px]`}>-</span>
      <span className={`${pane} w-[236px]`}>индикация: Моделирование...</span>
      <span className={`${pane} w-[236px]`}>Время раб: 0.046 s</span>
      <span className={`${pane} flex w-[62px] items-center gap-[2px]`}>
        {[1, 2, 3, 4, 5, 6, 7].map((n) => <i key={n} className="h-3 w-[6px] bg-[#10f010]" />)}
      </span>
    </footer>
  )
}

function AppArt({ children }: { children: ReactNode }) {
  return (
    <svg width="32" height="32" viewBox="0 0 32 32" fill="none" aria-hidden="true">
      {children}
    </svg>
  )
}

const launchers: { name: string; art: ReactNode }[] = [
  {
    name: 'Internet Explorer',
    art: (
      <>
        <path d="M26 21c-2 4-5 6-10 6-6 0-10-4-10-10S10 6 16 6s11 5 10 12H12" stroke="#1868b8" strokeWidth="5.5" />
        <path d="M8 10c4-5 12-6 16-1" stroke="#60b0e8" strokeWidth="2.5" />
        <path d="M5 30C-2 28 6 12 18 5c5-3 11-4 10 2M5 30c3 1 6 0 9-2" stroke="#f0b820" strokeWidth="2.5" />
      </>
    ),
  },
  {
    name: 'Проигрыватель',
    art: (
      <>
        <path d="M10 5h17v23H10z" fill="#88bce0" stroke="#5890c0" />
        <path d="M7 5h17v23H7z" fill="#a0cce8" stroke="#5890c0" />
        <path d="M3 5h17v24H3z" fill="#c4e0f4" stroke="#5890c0" />
        <circle cx="12" cy="17" r="8.5" fill="#f07818" stroke="#d86008" />
        <path d="M9 12v10l8-5z" fill="#fff" />
      </>
    ),
  },
  {
    name: 'KMPlayer',
    art: (
      <>
        <circle cx="16" cy="16" r="13.5" fill="#c4d4e4" stroke="#2878d0" strokeWidth="4" />
        <path d="M5 8h22M11 9v14M22 9l-8 7 8 8M8 27L26 6" stroke="#2878d0" strokeWidth="3" />
      </>
    ),
  },
  {
    name: 'Загрузчик',
    art: (
      <>
        <circle cx="16" cy="16" r="15" fill="#303840" />
        <circle cx="16" cy="16" r="12" fill="#2098d8" stroke="#d8f0f8" strokeWidth="2" />
        <path d="M12 8h8v8h4l-8 8-8-8h4z" fill="#fff" />
      </>
    ),
  },
  {
    name: 'Конвертер',
    art: (
      <>
        <rect width="32" height="32" rx="2" fill="#484848" />
        <circle cx="16" cy="16" r="12" stroke="#fff" strokeWidth="3" />
        <path d="M6 15L22 7M5 20l22-11M8 24l20-10" stroke="#fff" strokeWidth="3" />
      </>
    ),
  },
  {
    name: 'Монитор',
    art: (
      <>
        <path d="M2 9l7-2v16l-7 2z" fill="#a8a8a0" stroke="#606060" />
        <path d="M9 4l21 3-3 17-20-3z" fill="#b8b8b0" stroke="#686868" />
        <path d="M12 6l15 2-2 13-15-2z" fill="#102818" />
        <path d="M12 14l4-3 3 5 3-5 3 4M12 10h13M11 17h13" stroke="#30c850" />
        <path d="M10 25l14 1 3 3-16 1z" fill="#d0d0c8" stroke="#808080" />
      </>
    ),
  },
  {
    name: 'XnView',
    art: (
      <>
        <rect x="1.5" y="2.5" width="29" height="23" rx="1" fill="#78b4ec" stroke="#c8ccd4" strokeWidth="2" />
        <path d="M3 18c8-1 18-4 26-6v12H3z" fill="#5898dc" />
        <path d="M4 6c9 2 9 17 0 19M18 6c-7 5-7 14 0 18" stroke="#183868" strokeWidth="3" />
        <path d="M8 29h16" stroke="#909090" strokeWidth="3" />
      </>
    ),
  },
  {
    name: 'Guitar Pro 6',
    art: (
      <>
        <path d="M3 5c4-5 22-5 26 0 2 8-7 22-13 27C10 27 1 13 3 5z" fill="#181818" />
        <path d="M13 10L26 2M15 12l12-7M20 8l6 7" stroke="#b0b0b0" strokeWidth="1.5" />
        <text x="7" y="22" fontSize="10" fontWeight="bold" fill="#fff" fontFamily="Liberation Sans, sans-serif">
          gp<tspan fill="#e02020">6</tspan>
        </text>
      </>
    ),
  },
]

const windows: { name: string; art: ReactNode }[] = [
  {
    name: 'Проводник',
    art: (
      <>
        <path d="M1 7l2-4h8l2 3h15l2 3v18H1z" fill="#e8c868" stroke="#c8a040" />
        <path d="M6 4h8v4H6zM16 6h9v3h-9z" fill="#fff" stroke="#90b060" />
        <path d="M1 10h30v19H1z" fill="#f8e498" stroke="#d8b050" />
        <path d="M6 31V20h20v11h-5v-6H11v6z" fill="#a8d8f0" stroke="#4898c8" />
      </>
    ),
  },
  {
    name: 'Skype',
    art: (
      <>
        <circle cx="10" cy="10" r="9" fill="#18a8e8" />
        <circle cx="20" cy="20" r="10" fill="#18a8e8" />
        <circle cx="15" cy="15" r="12" fill="#18a8e8" />
        <text x="8" y="23" fontSize="22" fontWeight="bold" fill="#fff" fontFamily="Liberation Sans, sans-serif">S</text>
        <path d="M18 20c5-1 9 0 12 2 1 4 0 7-2 9-5 0-10-3-10-11z" fill="#fff" stroke="#80c020" strokeWidth="2" />
      </>
    ),
  },
  {
    name: 'Multisim',
    art: (
      <>
        <rect x="2" y="2" width="28" height="28" rx="2" fill="#484880" />
        <path d="M1 7h13l2-3h8M1 13h9l4 3h6M18 10h13M20 15h11M1 22h13v-5M7 30v-5h5v5M18 30v-7M23 30v-8h8" stroke="#c8c8e0" strokeWidth="1.5" />
        <path d="M25 7h6M18 10h3M11 22h4M22 22h3M25 13h6" stroke="#f0d070" strokeWidth="2" />
      </>
    ),
  },
  {
    name: 'µTorrent',
    art: (
      <>
        <circle cx="16" cy="16" r="15" fill="#108040" />
        <path d="M9 7l3 13c1 4 8 4 9-1L19 7M20 16c1 6 5 7 8 4M12 20l2 10" stroke="#fff" strokeWidth="4" />
      </>
    ),
  },
  {
    name: 'Яндекс.Браузер',
    art: (
      <>
        <circle cx="16" cy="16" r="15" fill="#f0f0f0" stroke="#c8c8c8" />
        <path d="M4 5c6 1 10 6 12 13M28 4c-6 1-10 6-12 14l-1 13" stroke="#e02020" strokeWidth="6" />
      </>
    ),
  },
  {
    name: 'Запись',
    art: (
      <>
        <path d="M7 1h25v24H7z" fill="#0818a0" />
        <path d="M7 8c3-8 6-8 9 0s6 4 9-3 4-4 7 1" stroke="#e8e020" strokeWidth="2" />
        <path d="M16 20v-5h6v6h5v-6h5" stroke="#30d0f0" strokeWidth="2" />
        <circle cx="10" cy="22" r="9.5" fill="#e00810" stroke="#700000" />
        <ellipse cx="7" cy="17" rx="2.5" ry="2" fill="#ff9090" />
      </>
    ),
  },
]

function Taskbar() {
  return (
    <footer className="flex h-[41px] shrink-0 items-center border-t border-white pr-[1px] pl-[2px]">
      <button type="button" className={`flex h-[38px] w-[52px] items-center justify-center gap-[1px] font-bold ${RAISED}`}>
        <svg width="15" height="15" viewBox="0 0 15 15" aria-hidden="true">
          <path d="M2 2q2-2 5 0L6 7Q3 5 1 7z" fill="#e85020" />
          <path d="M8 2q3 2 6 0l-1 5q-3 2-6 0z" fill="#78b828" />
          <path d="M1 8q2-2 5 0l-1 5q-3-2-5 0z" fill="#3880d8" />
          <path d="M7 8q3 2 6 0l-1 5q-3 2-6 0z" fill="#f8c020" />
        </svg>
        Пуск
      </button>
      <div className="flex pl-2">
        {launchers.map((l) => (
          <button key={l.name} type="button" aria-label={l.name} className="flex w-[50px] justify-center">
            <AppArt>{l.art}</AppArt>
          </button>
        ))}
      </div>
      <div className="flex gap-[2px]">
        {windows.map((w) => (
          <button key={w.name} type="button" aria-label={w.name} className={`flex h-[38px] w-12 items-center justify-center ${RAISED}`}>
            <AppArt>{w.art}</AppArt>
          </button>
        ))}
      </div>
      <div className="flex-1" />
      <svg width="24" height="22" viewBox="0 0 24 22" aria-hidden="true">
        <path d="M2 7h19v13H2z" fill="#f4f0d8" stroke="#506878" strokeWidth="1.5" />
        <path d="M5 15h3l1-3 2 3" fill="none" stroke="#705020" />
        <path d="M12 15L21 1" stroke="#283848" strokeWidth="2.5" />
      </svg>
      <span className="ml-[18px] font-['Liberation_Sans',sans-serif] text-[12px]">EN</span>
      <span className="ml-[5px] h-[34px] w-[2px] border-r border-l border-r-white border-l-[#808080]" />
      <div className="ml-[3px] flex h-[39px] w-[206px] items-center border border-t-[#808080] border-r-white border-b-white border-l-[#808080] pl-[6px]">
        <svg width="6" height="9" fill="none" stroke="#000" strokeWidth="1.5" aria-hidden="true">
          <path d="M1 4l2-2.500L5 4M1 8l2-2.500L5 8" />
        </svg>
        <div className="ml-[9px] flex gap-2">
          <Icon>
            <path d="M2.5 1v14M3 2.5c3-1 5 1 8 0V9c-3 1-5-1-8 0" fill="#fff" stroke="#505050" />
            <circle cx="11" cy="11.5" r="4" fill="#d02828" stroke="#901010" />
            <path d="M9.5 10l3 3M12.5 10l-3 3" stroke="#fff" />
          </Icon>
          <Icon>
            <path d="M2.5 3.5h6v11h-6zM4 1.5h3" fill="#fff" stroke="#505050" />
            <path d="M9.5 1v3M13.5 1v3M8 4.5h7v3l-2 2h-3l-2-2zM11.5 10v4H6" fill="#fff" stroke="#404040" />
          </Icon>
          <Icon>
            <path d="M5.5 4.5h10v8h-10z" fill="#b8b8b0" stroke="#505050" />
            <path d="M8 15h6M1.5 1v3h3V1M3 4v9h3" stroke="#404040" />
          </Icon>
          <Icon>
            <path d="M1.5 5.5h3l4-4v13l-4-4h-3z" fill="#f0f0ec" stroke="#707070" />
            <path d="M10.5 5c1.500 2 1.500 4 0 6M13 3c2 3 2 7 0 10" stroke="#909090" />
          </Icon>
        </div>
        <time className="flex-1 pl-1 text-center leading-4">
          11:40
          <br />
          03.10.2013
        </time>
        <svg width="16" height="14" className="mr-px" aria-hidden="true">
          <path d="M0 1h16v10H0z" fill="#2860b0" />
          <path d="M0 1h16L4 8H0z" fill="#5898e0" />
          <path d="M0 11h16v2H0z" fill="#182840" />
        </svg>
      </div>
    </footer>
  )
}

export default function App() {
  return (
    <div className="flex h-screen flex-col overflow-hidden bg-[#d4d0c8] font-['DejaVu_Sans_Condensed','DejaVu_Sans',sans-serif] text-[11px] leading-[14px] whitespace-nowrap text-black">
      <TitleBar />
      <MenuBar />
      <Toolbars />
      <div className="flex min-h-0 flex-1">
        <DesignPanel />
        <Workspace />
        <InstrumentBar />
      </div>
      <InfoPanel />
      <StatusBar />
      <Taskbar />
    </div>
  )
}
